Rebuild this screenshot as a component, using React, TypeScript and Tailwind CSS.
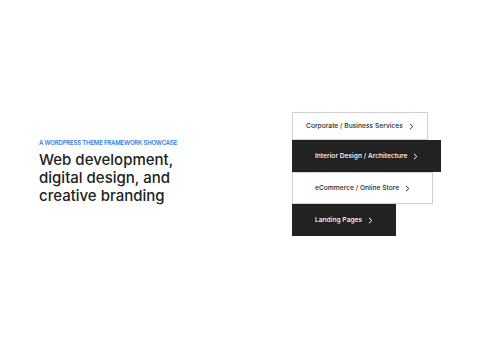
import React from 'react'

const links = [
  { label: 'Corporate / Business Services', dark: false, size: 'sm' },
  { label: 'Interior Design / Architecture', dark: true, size: 'lg' },
  { label: 'eCommerce / Online Store', dark: false, size: 'lg' },
  { label: 'Landing Pages', dark: true, size: 'lg' },
]

function Chevron() {
  return (
    <svg width="5" height="7" viewBox="0 0 5 7" fill="none" className="shrink-0">
      <path d="M1 0.8 L3.8 3.5 L1 6.2" stroke="currentColor" strokeWidth="1" />
    </svg>
  )
}

export default function App() {
  return (
    <div
      className="w-[500px] h-[348px] bg-white flex items-center pl-[39px]"
      style={{ fontFamily: 'Inter, "Noto Sans", sans-serif' }}
    >
      <div className="w-[253px] -mt-[4px]">
        <div className="text-[6px] leading-[8px] font-semibold uppercase tracking-[-0.03em] text-[#2f7fe0]">
          A WordPress Theme Framework Showcase
        </div>
        <h1 className="mt-[4px] text-[15px] leading-[18px] font-medium text-[#222222]">
          Web development,
          <br />
          digital design, and
          <br />
          creative branding
        </h1>
      </div>
      <div className="flex flex-col items-start">
        {links.map(l => (
          <a
            key={l.label}
            href="#"
            className={
              (l.dark
                ? 'bg-[#222222] text-white border border-[#222222] '
                : 'bg-white text-[#2a2a2a] border border-[#cfcfcf] ') +
              (l.size === 'sm' ? 'h-[28px] px-[13px] ' : 'h-[32px] px-[22px] ') +
              'flex items-center gap-[6px] text-[6.7px] font-medium'
            }
          >
            <span>{l.label}</span>
            <Chevron />
          </a>
        ))}
      </div>
    </div>
  )
}
